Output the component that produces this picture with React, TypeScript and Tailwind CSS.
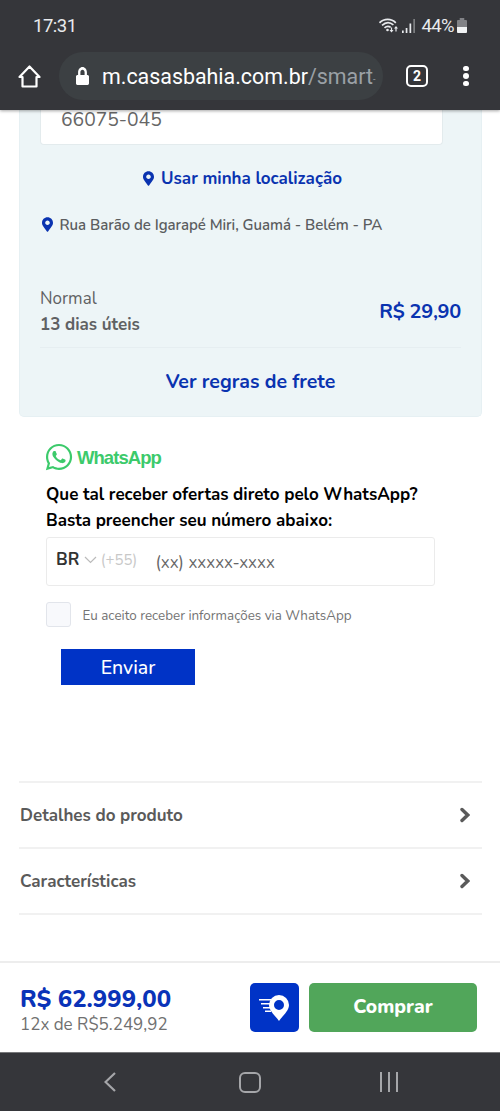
import type { ReactNode } from "react"
import { FaLock, FaMapMarkerAlt, FaWhatsapp } from "react-icons/fa"

function StatusBar() {
  return (
    <div className="flex h-[52px] items-center justify-between pl-[33px] pr-[33px] font-['Roboto'] text-[18.5px] text-[#e8eaed]">
      <span className="pt-px tracking-[-0.5px]">17:31</span>
      <div className="flex items-center">
        <svg width="20" height="16" viewBox="0 0 20 16" fill="none" stroke="currentColor" strokeWidth="1.7">
          <path d="M.5 4.800C5 .200 12.300.200 16.800 4.800" />
          <path d="M3 7.400C6.700 4 11 4 14.400 6.900" />
          <path d="M5.500 9.900C7.700 8 9.700 8 11.700 9.400" />
          <circle cx="8.500" cy="12" r="1.300" fill="currentColor" stroke="none" />
          <path d="M12.500 9.500v4M17 13.500v-4" strokeWidth="1.200" />
          <path d="M10.500 12h4l-2 2.600zM15 10.600h4l-2-2.600z" fill="currentColor" stroke="none" />
        </svg>
        <svg className="ml-[3px]" width="14" height="16" viewBox="0 0 14 16" fill="currentColor">
          <path d="M0 12.500h1.700V15H0zM3.700 10h1.700v5H3.700zM7.500 5.500h1.700V15H7.500z" />
          <path d="M11.300 1H13v14h-1.700z" opacity=".4" />
        </svg>
        <span className="ml-[5px] pt-px tracking-[-0.6px]">44%</span>
        <svg className="ml-[3px]" width="10" height="16" viewBox="0 0 11 16" preserveAspectRatio="none">
          <path d="M3 0h5v2h2a1 1 0 0 1 1 1v6H0V3a1 1 0 0 1 1-1h2z" fill="#818286" />
          <path d="M0 9h11v5a1 1 0 0 1-1 1H1a1 1 0 0 1-1-1z" fill="#f1f3f4" />
        </svg>
      </div>
    </div>
  )
}

function AddressBar() {
  return (
    <div className="flex h-[48px] items-center text-white">
      <svg className="ml-[18px]" width="23" height="24" viewBox="0 0 23 24" fill="none" stroke="currentColor" strokeWidth="2.2" strokeLinejoin="round">
        <path d="M1.500 13 11.500 2.500l10 10.500h-3v9.500h-14V13z" />
      </svg>
      <div className="ml-[18px] flex h-[48px] w-[324px] items-center rounded-full bg-[#3c4043] pl-[17px]">
        <FaLock className="h-[18px] w-[13px]" preserveAspectRatio="none" />
        <div className="ml-[13px] whitespace-nowrap pt-[2px] font-['Roboto'] text-[21.4px]">
          m.casasbahia.com.br<span className="text-[#9aa0a6]">/smart</span>
          <span className="align-[2px] text-[9px] text-[#9aa0a6]">-</span>
        </div>
      </div>
      <div className="ml-[23px] flex h-[22px] w-[22px] items-center justify-center rounded-[5px] border-2 border-white font-['Roboto'] text-[14px] font-bold">
        2
      </div>
      <div className="ml-[35px] flex flex-col gap-[2px]">
        <span className="h-[5.5px] w-[5.5px] rounded-full bg-white" />
        <span className="h-[5.5px] w-[5.5px] rounded-full bg-white" />
        <span className="h-[5.5px] w-[5.5px] rounded-full bg-white" />
      </div>
    </div>
  )
}

function ShippingPanel() {
  return (
    <section className="ml-[19px] h-[307px] w-[463px] rounded-b-[5px] border border-t-0 border-[#e6f0f3] bg-[#edf5f7] px-5">
      <div className="h-[35px] w-[403px] rounded-b-[4px] border border-t-0 border-[#e3ebed] bg-white pl-5 text-[19.3px] leading-[20px] text-[#666]">
        66075-045
      </div>
      <div className="flex h-[66px] items-center pl-[103px] text-[17px] font-bold text-[#0a33b0]">
        <FaMapMarkerAlt className="h-[15px] w-[11px]" />
        <span className="ml-[7px] pt-[2px]">Usar minha localização</span>
      </div>
      <div className="flex h-[27px] items-center pl-[2px] text-[15px] font-semibold text-[#5b5d5f]">
        <FaMapMarkerAlt className="h-[15px] w-[11px] text-[#0a33b0]" />
        <span className="ml-[6.5px] pt-[2px] tracking-[-0.06px]">Rua Barão de Igarapé Miri, Guamá - Belém - PA</span>
      </div>
      <div className="mt-[46px] flex h-[64px] items-center justify-between border-b border-[#e6eef1] pb-[8px]">
        <div className="pt-px text-[17px] leading-[26px] text-[#5f6163]">
          <p>Normal</p>
          <p className="font-bold">13 dias úteis</p>
        </div>
        <span className="text-[20px] font-bold tracking-[-0.3px] text-[#0a33b0]">R$ 29,90</span>
      </div>
      <div className="flex h-[67px] items-center justify-center text-[19.5px] font-bold text-[#0a33b0]">
        <span className="pt-px">Ver regras de frete</span>
      </div>
    </section>
  )
}

function WhatsAppForm() {
  return (
    <section className="h-[364px] pl-[46px] pt-[26px]">
      <div className="flex h-[28px] items-center text-[#3cca6b]">
        <FaWhatsapp className="-ml-[2px] h-[30px] w-[30px]" />
        <span className="ml-[3px] pt-px font-['Liberation_Sans'] text-[18.5px] font-bold tracking-[-0.95px]">WhatsApp</span>
      </div>
      <div className="mt-[11px] text-[17px] font-bold leading-[25.5px] text-black">
        <p>Que tal receber ofertas direto pelo WhatsApp?</p>
        <p>Basta preencher seu número abaixo:</p>
      </div>
      <div className="mt-[4px] flex h-[49px] w-[389px] items-center rounded-[3px] border border-[#ebebeb] pb-[4px] pl-[9px]">
        <span className="pt-px text-[17px] font-bold text-[#333]">BR</span>
        <svg className="ml-[5px]" width="13" height="8" viewBox="0 0 13 8" fill="none" stroke="#bbb" strokeWidth="1.2">
          <path d="m1 1 5.500 5.500L12 1" />
        </svg>
        <span className="ml-[3.5px] pt-px text-[15px] text-[#c8c8c8]">(+55)</span>
        <span className="ml-[18px] mt-[5px] pt-px text-[17px] text-[#666]">(xx) xxxxx-xxxx</span>
      </div>
      <div className="mt-[16px] flex h-[25px] items-center">
        <span className="h-[25px] w-[25px] rounded-[3px] border border-[#e2e5eb] bg-[#f8f9fc]" />
        <span className="ml-[11.5px] pt-[3px] text-[13.4px] text-[#737373]">Eu aceito receber informações via WhatsApp</span>
      </div>
      <button className="ml-[15px] mt-[22px] flex h-[36px] w-[134px] items-center justify-center bg-[#0033c6] pt-[2px] text-[19.5px] font-medium text-white">
        Enviar
      </button>
    </section>
  )
}

function AccordionRow({ children }: { children: ReactNode }) {
  return (
    <div className="flex h-[66px] items-center justify-between border-b-2 border-[#f1f1f1] pl-px pr-[12px] text-[17px] font-bold text-[#5a5a5a]">
      <span className="pt-[2px]">{children}</span>
      <svg width="10" height="16" viewBox="0 0 10 16" fill="none" stroke="currentColor" strokeWidth="3.4" strokeLinecap="round">
        <path d="m2 2.500 5.700 5.500L2 13.500" />
      </svg>
    </div>
  )
}

function BuyBar() {
  return (
    <div className="flex h-[91px] items-center border-t-2 border-[#ededed] pl-5">
      <div className="w-[230px] pt-[6px]">
        <p className="text-[24px] font-extrabold leading-[27px] text-[#0a33b8]">R$ 62.999,00</p>
        <p className="text-[17px] leading-[23px] text-[#707070]">12x de R$5.249,92</p>
      </div>
      <button className="flex h-[49px] w-[49px] items-center justify-center rounded-[5px] bg-[#0033c6]">
        <svg width="31" height="28" viewBox="0 0 31 28" fill="#fff">
          <path fillRule="evenodd" d="M20 1a10 10 0 0 1 10 10c0 6-7 11.500-10 16C17 22.500 10 17 10 11A10 10 0 0 1 20 1m0 5a5 5 0 1 0 0 10 5 5 0 0 0 0-10" />
          <path d="M0 5h12v1.400H0zM2 9h9v1.400H2zM4 13h7v1.400H4zM6 16.500h6v1.400H6z" />
        </svg>
      </button>
      <button className="ml-[10px] h-[49px] w-[168px] rounded-[5px] bg-[#51a65a] text-[19.3px] font-extrabold text-white">
        Comprar
      </button>
    </div>
  )
}

function NavigationBar() {
  return (
    <div className="flex h-[59px] items-center border-t border-[#77787a] bg-[#35363a] text-[#a5a6a9]">
      <svg className="ml-[104px]" width="12" height="20" viewBox="0 0 12 20" fill="none" stroke="currentColor" strokeWidth="2.2">
        <path d="M11 1 1.500 10 11 19" />
      </svg>
      <span className="ml-[123px] h-[21px] w-[22px] rounded-[6px] border-2 border-current" />
      <div className="ml-[119px] flex h-[20px] gap-[6px]">
        <span className="w-[2px] bg-current" />
        <span className="w-[2px] bg-current" />
        <span className="w-[2px] bg-current" />
      </div>
    </div>
  )
}

export default function App() {
  return (
    <div className="h-[1111px] w-[500px] overflow-hidden bg-white font-['Nunito','Open_Sans',sans-serif]">
      <header className="relative h-[110px] bg-[#35363a] shadow-[0_1px_3px_rgba(0,0,0,0.35)]">
        <StatusBar />
        <AddressBar />
      </header>
      <ShippingPanel />
      <WhatsAppForm />
      <div className="ml-[19px] h-[180px] w-[463px]">
        <div className="border-t-2 border-[#f1f1f1]">
          <AccordionRow>Detalhes do produto</AccordionRow>
          <AccordionRow>Características</AccordionRow>
        </div>
      </div>
      <BuyBar />
      <NavigationBar />
    </div>
  )
}
